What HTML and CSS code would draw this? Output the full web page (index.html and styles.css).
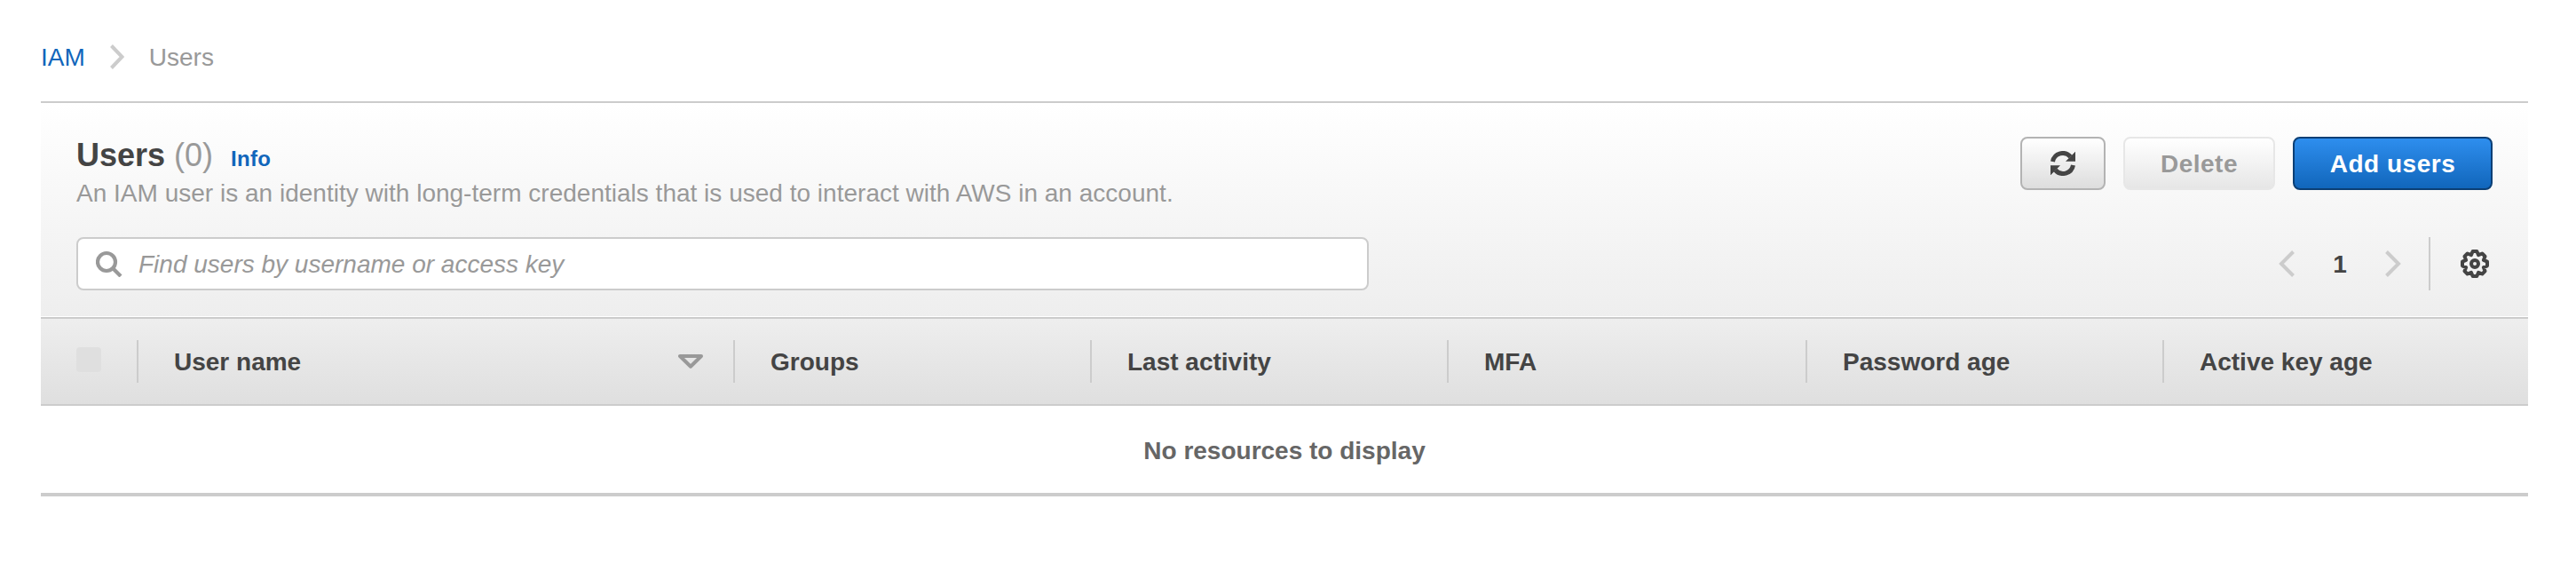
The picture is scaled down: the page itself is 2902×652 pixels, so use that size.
FILE: index.html
```html
<!DOCTYPE html>
<html lang="en">
<head>
<meta charset="utf-8">
<title>IAM Users</title>
<link rel="stylesheet" href="styles.css">
</head>
<body>
<nav class="breadcrumb">
  <a href="#">IAM</a>
  <svg class="crumb-sep" width="16" height="28" viewBox="0 0 16 28"><path d="M1.500 1.500 13.500 14 1.500 26.500"/></svg>
  <span>Users</span>
</nav>
<main class="panel">
  <header class="panel-head">
    <div class="title-row">
      <div class="titles">
        <div class="title-line"><h1>Users <span class="count">(0)</span></h1><a class="info" href="#">Info</a></div>
        <p class="desc">An IAM user is an identity with long-term credentials that is used to interact with AWS in an account.</p>
      </div>
      <div class="actions">
        <button class="btn btn-refresh" aria-label="Refresh"><svg width="28" height="28" viewBox="0 0 28 28"><path class="arc" d="M2.500 12A11.500 11.500 0 0 1 22.500 6.500M25.500 16A11.500 11.500 0 0 1 5.500 21.500"/><path class="tip" d="M28 1V11.500H17.500ZM0 27V16.500H10.500Z"/></svg></button>
        <button class="btn btn-delete" disabled>Delete</button>
        <button class="btn btn-add">Add users</button>
      </div>
    </div>
    <div class="tools">
      <label class="search">
        <svg width="30" height="30" viewBox="0 0 30 30"><circle cx="12" cy="13" r="10"/><path d="M19 20 28 29"/></svg>
        <input type="text" placeholder="Find users by username or access key">
      </label>
      <div class="pager">
        <svg class="chev" width="18" height="30" viewBox="0 0 18 30"><path d="M16.500 1.500 3 15 16.500 28.500"/></svg>
        <span class="page">1</span>
        <svg class="chev" width="18" height="30" viewBox="0 0 18 30"><path d="M1.500 1.500 15 15 1.500 28.500"/></svg>
        <span class="rule"></span>
        <svg class="gear" width="32" height="32" viewBox="0 0 32 32"><path d="M13.700 2H18.300L20.100 6.100 24.300 4.500 27.500 7.700 25.900 11.900 30 13.700V18.300L25.900 20.100 27.500 24.300 24.300 27.500 20.100 25.900 18.300 30H13.700L11.900 25.900 7.700 27.500 4.500 24.300 6.100 20.100 2 18.300V13.700L6.100 11.900 4.500 7.700 7.700 4.500 11.900 6.100Z"/><circle cx="16" cy="16" r="4"/></svg>
      </div>
    </div>
  </header>
  <div class="columns">
    <div class="col col-check"><span class="check"></span></div>
    <div class="col"><span class="label">User name</span><svg class="sort" width="28" height="16" viewBox="0 0 28 16"><path d="M2 2H26L14 13.700Z"/></svg></div>
    <div class="col"><span class="label">Groups</span></div>
    <div class="col"><span class="label">Last activity</span></div>
    <div class="col"><span class="label">MFA</span></div>
    <div class="col"><span class="label">Password age</span></div>
    <div class="col"><span class="label">Active key age</span></div>
  </div>
  <div class="empty">No resources to display</div>
</main>
</body>
</html>
```
FILE: styles.css
```css
* { box-sizing: border-box; }
body {
  margin: 0;
  padding: 0 54px 0 46px;
  background: #fff;
  color: #444;
  font: 28px/40px "Liberation Sans", Arial, sans-serif;
}
svg { display: block; flex: none; fill: none; }
a { color: #1166bb; text-decoration: none; }
.breadcrumb { display: flex; align-items: flex-start; height: 114px; padding-top: 45px; color: #999; }
.crumb-sep { margin: 5px 28px 0; stroke: #ccc; stroke-width: 4; }
.panel { border-top: 2px solid #ccc; border-bottom: 4px solid #ccc; }
.panel-head {
  height: 241px;
  padding: 38px 40px 0;
  border-bottom: 1px solid #fff;
  background: linear-gradient(#fff, #eee);
}
.title-row { display: flex; justify-content: space-between; height: 113px; }
.title-line { display: flex; align-items: baseline; height: 44px; padding-top: 1px; }
h1 { margin: 0; font-size: 36px; line-height: 40px; }
.count { font-weight: 400; color: #999; }
.info { margin-left: 20px; font-size: 24px; font-weight: 700; letter-spacing: 0.25px; }
.desc { margin: 0; color: #999; letter-spacing: 0.01px; }
.actions { display: flex; gap: 20px; }
.btn {
  display: flex;
  align-items: center;
  justify-content: center;
  height: 60px;
  padding: 2px 0 0;
  border: 2px solid #b3b3b3;
  border-radius: 8px;
  background: linear-gradient(#fff, #ddd);
  font: 700 28px/40px "Liberation Sans", Arial, sans-serif;
  letter-spacing: 0.5px;
  color: #444;
}
.btn-refresh { width: 96px; padding: 0; }
.arc { stroke: #444; stroke-width: 5; }
.tip { fill: #444; stroke: #444; stroke-width: 0.5; stroke-linejoin: round; }
.btn-delete { width: 171px; border-color: #e7e7e7; background: linear-gradient(#fff, #e6e6e6); color: #999; }
.btn-add { width: 225px; border-color: #0b3f75; background: linear-gradient(#2e8eee, #1166bb); color: #fff; }
.tools { display: flex; justify-content: space-between; }
.search {
  display: flex;
  align-items: center;
  gap: 18px;
  width: 1456px;
  height: 60px;
  padding-left: 20px;
  border: 2px solid #ccc;
  border-radius: 8px;
  background: #fff;
}
.search svg { stroke: #999; stroke-width: 4.2; }
.search input { flex: 1; padding: 2px 0 0; border: 0; outline: 0; background: none; font: italic 28px/40px "Liberation Sans", Arial, sans-serif; }
.search input::placeholder { color: #999; opacity: 1; }
.pager { display: flex; align-items: center; height: 60px; padding-right: 4px; }
.chev { stroke: #ccc; stroke-width: 4; }
.page { width: 102px; padding-top: 2px; text-align: center; font-weight: 700; }
.rule { width: 2px; height: 60px; margin: 0 34px 0 31px; background: #ccc; }
.gear { stroke: #444; stroke-width: 4; stroke-linejoin: round; }
.columns {
  display: grid;
  grid-template-columns: 110px 672px 402px 402px 404px 402px 410px;
  align-items: center;
  height: 100px;
  border-top: 2px solid #ccc;
  border-bottom: 2px solid #ccc;
  background: linear-gradient(#eee, #dfdfdf);
  font-weight: 700;
}
.col { display: flex; align-items: center; justify-content: space-between; height: 48px; padding: 0 34px 0 40px; border-right: 2px solid #ccc; }
.col:last-child { border-right: 0; }
.label { padding-top: 2px; }
.check { width: 28px; height: 28px; margin-top: -4px; border-radius: 4px; background: #dfdfdf; }
.sort { stroke: #999; stroke-width: 4; stroke-linejoin: round; }
.empty { height: 98px; padding-top: 31px; text-align: center; font-weight: 700; color: #666; }
```
